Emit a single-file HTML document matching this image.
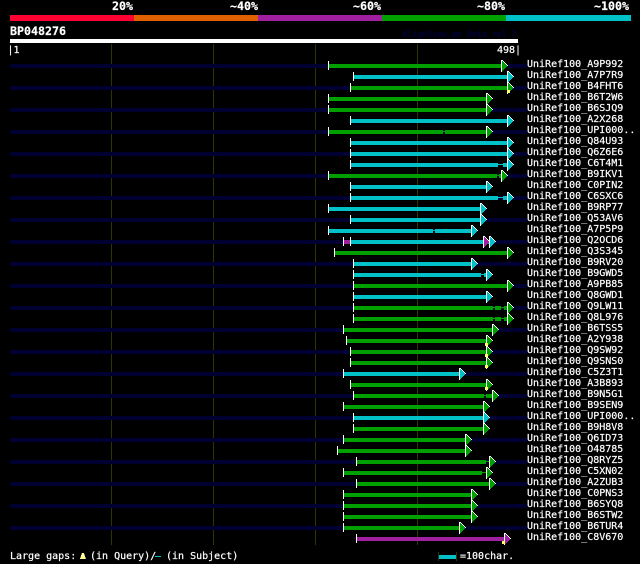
<!DOCTYPE html>
<html><head><meta charset="utf-8"><style>
html,body{margin:0;padding:0;background:#000;width:640px;height:564px;overflow:hidden}
svg{display:block}
text{font-family:"DejaVu Sans Mono","Liberation Mono",monospace;font-size:10px;fill:#fff;stroke:#fff;stroke-width:.2px}
.b{font-weight:bold;font-size:11.63px}
.l{font-size:10px}
.g{fill:#00a000}.c{fill:#00c0c8}.p{fill:#a020a0}
rect[height="3"]{height:4px}
#y{height:3px}
</style></head><body>
<svg width="640" height="564" viewBox="0 0 640 564" xmlns="http://www.w3.org/2000/svg" shape-rendering="crispEdges">
<defs>
<g id="a"><rect x="0" y="-4" width="1" height="12" fill="#fff"/><rect x="1" y="-3" width="1" height="10"/><rect x="2" y="-2" width="1" height="8"/><rect x="3" y="-1" width="1" height="6"/><rect x="4" y="0" width="1" height="4"/><rect x="5" y="1" width="1" height="2"/><rect x="1" y="-4" width="1" height="1" fill="#fff"/><rect x="2" y="-3" width="1" height="1" fill="#fff"/><rect x="3" y="-2" width="1" height="1" fill="#fff"/><rect x="4" y="-1" width="1" height="1" fill="#fff"/><rect x="5" y="0" width="1" height="1" fill="#fff"/><rect x="6" y="1" width="1" height="1" fill="#fff"/></g>
<rect id="t" x="0" y="-3" width="1" height="9" fill="#fff"/>
<rect id="y" x="-1" y="4" width="3" height="3" fill="#ffff66"/>
</defs>
<rect width="640" height="564" fill="#000"/>
<rect x="10" y="15" width="124" height="6" fill="#ff0033"/>
<rect x="134" y="15" width="124" height="6" fill="#e06000"/>
<rect x="258" y="15" width="124" height="6" fill="#a020a0"/>
<rect x="382" y="15" width="124" height="6" fill="#00a000"/>
<rect x="506" y="15" width="125" height="6" fill="#00c0c8"/>
<text class="b" x="112" y="10">20%</text>
<text class="b" x="230" y="10">~40%</text>
<text class="b" x="353" y="10">~60%</text>
<text class="b" x="477" y="10">~80%</text>
<text class="b" x="594" y="10">~100%</text>
<text class="b" x="10" y="35">BP048276</text>
<text x="402" y="37" style="fill:#000033;stroke:none;font-size:9px;font-weight:bold" textLength="115">AlignView.pm Beta rel.7</text>
<rect x="10" y="39" width="508" height="4" fill="#fff"/>
<text x="7.5" y="53">|1</text>
<text x="497" y="53">498|</text>
<rect x="111" y="44" width="1" height="501" fill="#333300"/>
<rect x="213" y="44" width="1" height="501" fill="#333300"/>
<rect x="315" y="44" width="1" height="501" fill="#333300"/>
<rect x="417" y="44" width="1" height="501" fill="#333300"/>

<g fill="#000033">
<rect x="10" y="64" width="517" height="3"/><rect x="10" y="86" width="517" height="3"/><rect x="10" y="108" width="517" height="3"/><rect x="10" y="130" width="517" height="3"/><rect x="10" y="152" width="517" height="3"/><rect x="10" y="174" width="517" height="3"/><rect x="10" y="196" width="517" height="3"/><rect x="10" y="218" width="517" height="3"/><rect x="10" y="240" width="517" height="3"/><rect x="10" y="262" width="517" height="3"/><rect x="10" y="284" width="517" height="3"/><rect x="10" y="306" width="517" height="3"/><rect x="10" y="328" width="517" height="3"/><rect x="10" y="350" width="517" height="3"/><rect x="10" y="372" width="517" height="3"/><rect x="10" y="394" width="517" height="3"/><rect x="10" y="416" width="517" height="3"/><rect x="10" y="438" width="517" height="3"/><rect x="10" y="460" width="517" height="3"/><rect x="10" y="482" width="517" height="3"/><rect x="10" y="504" width="517" height="3"/><rect x="10" y="526" width="517" height="3"/>
</g>

<g transform="translate(0,64)" class="g"><rect x="329" width="172" height="3"/><use href="#t" x="328"/><use href="#a" x="501"/></g>
<g transform="translate(0,75)" class="c"><rect x="354" width="153" height="3"/><use href="#t" x="353"/><use href="#a" x="507"/></g>
<g transform="translate(0,86)" class="g"><rect x="351" width="156" height="3"/><use href="#t" x="350"/><use href="#a" x="507"/><use href="#y" x="508"/></g>
<g transform="translate(0,97)" class="g"><rect x="329" width="157" height="3"/><use href="#t" x="328"/><use href="#a" x="486"/></g>
<g transform="translate(0,108)" class="g"><rect x="329" width="157" height="3"/><use href="#t" x="328"/><use href="#a" x="486"/></g>
<g transform="translate(0,119)" class="c"><rect x="351" width="156" height="3"/><use href="#t" x="350"/><use href="#a" x="507"/></g>
<g transform="translate(0,130)" class="g"><rect x="329" width="114" height="3"/><rect x="443" y="1" width="2" height="1"/><rect x="445" width="41" height="3"/><use href="#t" x="328"/><use href="#a" x="486"/></g>
<g transform="translate(0,141)" class="c"><rect x="351" width="156" height="3"/><use href="#t" x="350"/><use href="#a" x="507"/></g>
<g transform="translate(0,152)" class="c"><rect x="351" width="156" height="3"/><use href="#t" x="350"/><use href="#a" x="507"/></g>
<g transform="translate(0,163)" class="c"><rect x="351" width="147" height="3"/><rect x="498" y="1" width="5" height="1"/><rect x="503" width="4" height="3"/><use href="#t" x="350"/><use href="#a" x="507"/></g>
<g transform="translate(0,174)" class="g"><rect x="329" width="168" height="3"/><rect x="497" y="1" width="2" height="1"/><rect x="499" width="2" height="3"/><use href="#t" x="328"/><use href="#a" x="501"/></g>
<g transform="translate(0,185)" class="c"><rect x="351" width="135" height="3"/><use href="#t" x="350"/><use href="#a" x="486"/></g>
<g transform="translate(0,196)" class="c"><rect x="351" width="147" height="3"/><rect x="498" y="1" width="5" height="1"/><rect x="503" width="4" height="3"/><use href="#t" x="350"/><use href="#a" x="507"/></g>
<g transform="translate(0,207)" class="c"><rect x="329" width="151" height="3"/><use href="#t" x="328"/><use href="#a" x="480"/></g>
<g transform="translate(0,218)" class="c"><rect x="351" width="129" height="3"/><use href="#t" x="350"/><use href="#a" x="480"/></g>
<g transform="translate(0,229)" class="c"><rect x="329" width="104" height="3"/><rect x="433" y="1" width="2" height="1"/><rect x="435" width="36" height="3"/><use href="#t" x="328"/><use href="#a" x="471"/></g>
<g transform="translate(0,240)" class="c"><rect x="344" width="6" height="3" class="p"/><rect x="351" width="138" height="3"/><use href="#t" x="343"/><use href="#t" x="350"/><use href="#a" x="483" class="p"/><use href="#a" x="489"/></g>
<g transform="translate(0,251)" class="g"><rect x="335" width="172" height="3"/><use href="#t" x="334"/><use href="#a" x="507"/></g>
<g transform="translate(0,262)" class="c"><rect x="354" width="117" height="3"/><use href="#t" x="353"/><use href="#a" x="471"/></g>
<g transform="translate(0,273)" class="c"><rect x="354" width="127" height="3"/><rect x="481" y="1" width="3" height="1"/><rect x="484" width="2" height="3"/><use href="#t" x="353"/><use href="#a" x="486"/></g>
<g transform="translate(0,284)" class="g"><rect x="354" width="153" height="3"/><use href="#t" x="353"/><use href="#a" x="507"/></g>
<g transform="translate(0,295)" class="c"><rect x="354" width="132" height="3"/><use href="#t" x="353"/><use href="#a" x="486"/></g>
<g transform="translate(0,306)" class="g"><rect x="354" width="139" height="3"/><rect x="493" y="1" width="2" height="1"/><rect x="495" width="6" height="3"/><rect x="501" y="1" width="3" height="1"/><rect x="504" width="3" height="3"/><use href="#t" x="353"/><use href="#a" x="507"/></g>
<g transform="translate(0,317)" class="g"><rect x="354" width="139" height="3"/><rect x="493" y="1" width="2" height="1"/><rect x="495" width="6" height="3"/><rect x="501" y="1" width="3" height="1"/><rect x="504" width="3" height="3"/><use href="#t" x="353"/><use href="#a" x="507"/></g>
<g transform="translate(0,328)" class="g"><rect x="344" width="148" height="3"/><use href="#t" x="343"/><use href="#a" x="492"/></g>
<g transform="translate(0,339)" class="g"><rect x="347" width="139" height="3"/><use href="#t" x="346"/><use href="#a" x="486"/><use href="#y" x="486"/></g>
<g transform="translate(0,350)" class="g"><rect x="351" width="135" height="3"/><use href="#t" x="350"/><use href="#a" x="486"/><use href="#y" x="486"/></g>
<g transform="translate(0,361)" class="g"><rect x="351" width="135" height="3"/><use href="#t" x="350"/><use href="#a" x="486"/><use href="#y" x="486"/></g>
<g transform="translate(0,372)" class="c"><rect x="344" width="115" height="3"/><use href="#t" x="343"/><use href="#a" x="459"/></g>
<g transform="translate(0,383)" class="g"><rect x="351" width="135" height="3"/><use href="#t" x="350"/><use href="#a" x="486"/><use href="#y" x="486"/></g>
<g transform="translate(0,394)" class="g"><rect x="354" width="130" height="3"/><rect x="484" y="1" width="2" height="1"/><rect x="486" width="6" height="3"/><use href="#t" x="353"/><use href="#a" x="492"/></g>
<g transform="translate(0,405)" class="g"><rect x="344" width="139" height="3"/><use href="#t" x="343"/><use href="#a" x="483"/></g>
<g transform="translate(0,416)" class="c"><rect x="354" width="129" height="3"/><use href="#t" x="353"/><use href="#a" x="483"/></g>
<g transform="translate(0,427)" class="g"><rect x="354" width="129" height="3"/><use href="#t" x="353"/><use href="#a" x="483"/></g>
<g transform="translate(0,438)" class="g"><rect x="344" width="121" height="3"/><use href="#t" x="343"/><use href="#a" x="465"/></g>
<g transform="translate(0,449)" class="g"><rect x="338" width="127" height="3"/><use href="#t" x="337"/><use href="#a" x="465"/></g>
<g transform="translate(0,460)" class="g"><rect x="357" width="129" height="3"/><rect x="486" y="1" width="3" height="1"/><use href="#t" x="356"/><use href="#a" x="489"/></g>
<g transform="translate(0,471)" class="g"><rect x="344" width="138" height="3"/><rect x="482" y="1" width="4" height="1"/><use href="#t" x="343"/><use href="#a" x="486"/></g>
<g transform="translate(0,482)" class="g"><rect x="357" width="132" height="3"/><use href="#t" x="356"/><use href="#a" x="489"/></g>
<g transform="translate(0,493)" class="g"><rect x="344" width="127" height="3"/><use href="#t" x="343"/><use href="#a" x="471"/></g>
<g transform="translate(0,504)" class="g"><rect x="344" width="127" height="3"/><use href="#t" x="343"/><use href="#a" x="471"/></g>
<g transform="translate(0,515)" class="g"><rect x="344" width="127" height="3"/><use href="#t" x="343"/><use href="#a" x="471"/></g>
<g transform="translate(0,526)" class="g"><rect x="344" width="115" height="3"/><use href="#t" x="343"/><use href="#a" x="459"/></g>
<g transform="translate(0,537)" class="p"><rect x="357" width="147" height="3"/><use href="#t" x="356"/><use href="#a" x="504"/><use href="#y" x="503"/></g>

<g class="l">
<text x="527" y="67">UniRef100_A9P992</text>
<text x="527" y="78">UniRef100_A7P7R9</text>
<text x="527" y="89">UniRef100_B4FHT6</text>
<text x="527" y="100">UniRef100_B6T2W6</text>
<text x="527" y="111">UniRef100_B6SJQ9</text>
<text x="527" y="122">UniRef100_A2X268</text>
<text x="527" y="133">UniRef100_UPI000..</text>
<text x="527" y="144">UniRef100_Q84U93</text>
<text x="527" y="155">UniRef100_Q6Z6E6</text>
<text x="527" y="166">UniRef100_C6T4M1</text>
<text x="527" y="177">UniRef100_B9IKV1</text>
<text x="527" y="188">UniRef100_C0PIN2</text>
<text x="527" y="199">UniRef100_C6SXC6</text>
<text x="527" y="210">UniRef100_B9RP77</text>
<text x="527" y="221">UniRef100_Q53AV6</text>
<text x="527" y="232">UniRef100_A7P5P9</text>
<text x="527" y="243">UniRef100_Q2OCD6</text>
<text x="527" y="254">UniRef100_Q3S345</text>
<text x="527" y="265">UniRef100_B9RV20</text>
<text x="527" y="276">UniRef100_B9GWD5</text>
<text x="527" y="287">UniRef100_A9PB85</text>
<text x="527" y="298">UniRef100_Q8GWD1</text>
<text x="527" y="309">UniRef100_Q9LW11</text>
<text x="527" y="320">UniRef100_Q8L976</text>
<text x="527" y="331">UniRef100_B6TSS5</text>
<text x="527" y="342">UniRef100_A2Y938</text>
<text x="527" y="353">UniRef100_Q9SW92</text>
<text x="527" y="364">UniRef100_Q9SNS0</text>
<text x="527" y="375">UniRef100_C5Z3T1</text>
<text x="527" y="386">UniRef100_A3B893</text>
<text x="527" y="397">UniRef100_B9N5G1</text>
<text x="527" y="408">UniRef100_B9SEN9</text>
<text x="527" y="419">UniRef100_UPI000..</text>
<text x="527" y="430">UniRef100_B9H8V8</text>
<text x="527" y="441">UniRef100_Q6ID73</text>
<text x="527" y="452">UniRef100_O48785</text>
<text x="527" y="463">UniRef100_Q8RYZ5</text>
<text x="527" y="474">UniRef100_C5XN02</text>
<text x="527" y="485">UniRef100_A2ZUB3</text>
<text x="527" y="496">UniRef100_C0PNS3</text>
<text x="527" y="507">UniRef100_B6SYQ8</text>
<text x="527" y="518">UniRef100_B6STW2</text>
<text x="527" y="529">UniRef100_B6TUR4</text>
<text x="527" y="540">UniRef100_C8V670</text>
</g>

<text x="10" y="559">Large gaps:</text>
<polygon points="82,553 84,553 86,559 80,559" fill="#ffff99"/>
<text x="90" y="559">(in Query)/</text>
<rect x="155" y="556" width="6" height="1" fill="#00c0c8"/>
<text x="166" y="559">(in Subject)</text>
<rect x="438" y="552" width="1" height="9" fill="#333300"/>
<rect x="456" y="552" width="1" height="9" fill="#333300"/>
<rect x="439" y="555" width="17" height="3" fill="#00c0c8"/>
<text x="460" y="559">=100char.</text>
</svg>
</body></html>
